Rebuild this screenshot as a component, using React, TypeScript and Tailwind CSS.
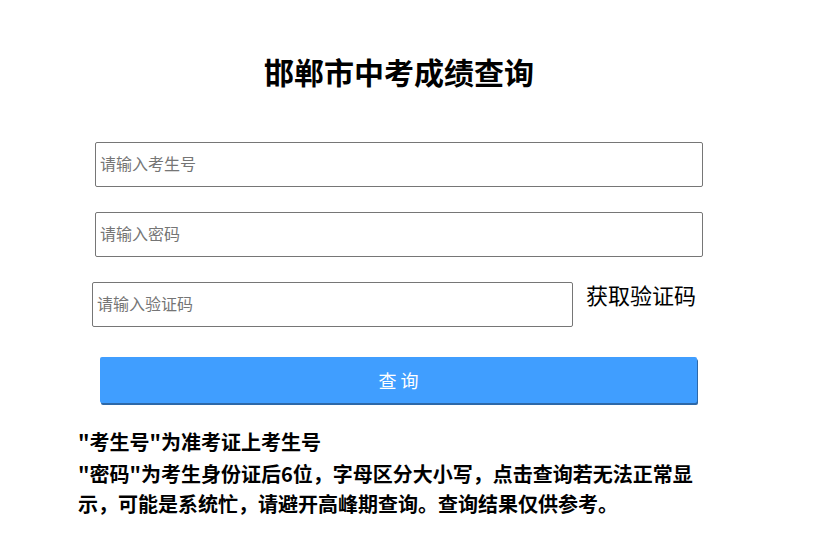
import React from "react";

const FONT = { fontFamily: '"Noto Sans CJK SC", "Noto Sans", sans-serif' };

export default function App() {
  return (
    <div className="min-h-screen w-full bg-white text-black" style={FONT}>
      <div className="ml-[78px] flex w-[642px] flex-col pt-[51px]">
        <h1 className="text-center text-[30px] font-bold leading-[40px]">邯郸市中考成绩查询</h1>

        <input
          className="ml-[17px] mt-[51px] h-[45px] w-[608px] rounded-[2px] border border-[#767676] px-[4px] pb-[3px] text-[16px] outline-none placeholder:text-[#757575]"
          placeholder="请输入考生号"
        />
        <input
          type="password"
          className="ml-[17px] mt-[25px] h-[45px] w-[608px] rounded-[2px] border border-[#767676] px-[4px] pb-[3px] text-[16px] outline-none placeholder:text-[#757575]"
          placeholder="请输入密码"
        />

        <div className="ml-[14px] mt-[25px] flex items-start">
          <input
            className="h-[45px] w-[481px] rounded-[2px] border border-[#767676] px-[4px] pb-[3px] text-[16px] outline-none placeholder:text-[#757575]"
            placeholder="请输入验证码"
          />
          <span className="ml-[13px] text-[22px] leading-[24px] text-black">获取验证码</span>
        </div>

        <button className="ml-[22px] mt-[30px] h-[46px] w-[597px] rounded-[2px] bg-[#409eff] text-[18px] text-white shadow-[1px_2px_0_#2d68a8]">
          查 询
        </button>

        <div className="mt-[24px] w-[620px] text-[20px] font-bold leading-[30px]">
          <p>"考生号"为准考证上考生号</p>
          <p className="mt-[2px]">
            "密码"为考生身份证后6位，字母区分大小写，点击查询若无法正常显示，可能是系统忙，请避开高峰期查询。查询结果仅供参考。
          </p>
        </div>
      </div>
    </div>
  );
}
